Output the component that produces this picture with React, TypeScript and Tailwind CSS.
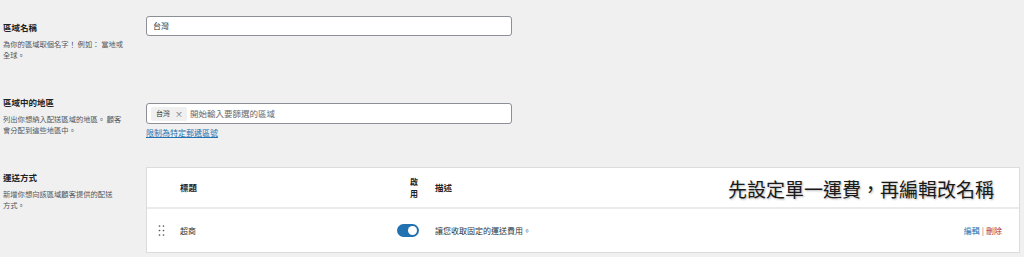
import React from "react";

const font = "font-['Noto_Sans_CJK_TC','Noto_Sans',sans-serif]";

function Label({ children }: { children: React.ReactNode }) {
  return <div className="text-[8.5px] leading-[12px] font-bold text-[#1d2327]">{children}</div>;
}

function Desc({ lines }: { lines: string[] }) {
  return (
    <div className="mt-[6px] text-[7.3px] leading-[10.5px] text-[#50575e]">
      {lines.map((l, i) => (
        <div key={i} className="whitespace-pre">{l}</div>
      ))}
    </div>
  );
}

function DragHandle() {
  return (
    <svg width="7" height="11" viewBox="0 0 7 11" className="block">
      {[1, 5.5, 10].map((y) =>
        [1.5, 5.5].map((x) => <circle key={`${x}-${y}`} cx={x} cy={y} r="0.85" fill="#50575e" />)
      )}
    </svg>
  );
}

export default function App() {
  return (
    <div lang="zh-TW" className={`${font} w-[1024px] h-[257px] bg-[#f0f0f0] text-[#1d2327] relative overflow-hidden`}>
      {/* Section 1 */}
      <div className="flex h-[90px]">
        <div className="w-[146px] pl-[3px] pt-[21px]">
          <Label>區域名稱</Label>
          <Desc lines={["為你的區域取個名字！ 例如： 當地或", "全球。"]} />
        </div>
        <div className="pt-[16px]">
          <div className="w-[366px] h-[20px] bg-white border border-[#8c8f94] rounded-[3px] flex items-center pl-[6px] text-[8px] text-[#2c3338]">
            台灣
          </div>
        </div>
      </div>

      {/* Section 2 */}
      <div className="flex h-[70px]">
        <div className="w-[146px] pl-[3px] pt-[6px]">
          <Label>區域中的地區</Label>
          <Desc lines={["列出你想納入配送區域的地區。 顧客", "會分配到這些地區中。"]} />
        </div>
        <div className="pt-[13px]">
          <div className="w-[366px] h-[21px] bg-white border border-[#8c8f94] rounded-[3px] flex items-center pl-[4px]">
            <div className="h-[14px] w-[36px] bg-[#f0f0f0] rounded-[2px] flex items-center pl-[5px] gap-[5px] text-[7px] text-[#2c3338]">
              <span>台灣</span>
              <span className="text-[#646970] text-[8px] leading-none">×</span>
            </div>
            <span className="ml-[3px] text-[8.5px] text-[#646970]">開始輸入要篩選的區域</span>
          </div>
          <div className="mt-[4px] text-[8px] leading-[10px] text-[#2271b1] underline">限制為特定郵遞區號</div>
        </div>
      </div>

      {/* Section 3 */}
      <div className="flex">
        <div className="w-[146px] pl-[3px] pt-[11px]">
          <Label>運送方式</Label>
          <Desc lines={["新增你想向該區域顧客提供的配送", "方式。"]} />
        </div>
        <div className="pt-[7px]">
          <div className="w-[874px] bg-white border border-[#dcdcde]">
            {/* header */}
            <div className="h-[41px] flex items-center border-b-2 border-[#ebebeb] text-[8.5px] font-bold text-[#1d2327]">
              <div className="w-[33px]" />
              <div className="w-[220px]">標題</div>
              <div className="w-[35px] text-[8px] leading-[12px] flex flex-col items-center pr-[7px]">
                <span>啟</span>
                <span>用</span>
              </div>
              <div>描述</div>
            </div>
            {/* row */}
            <div className="h-[43px] flex items-center text-[8px] text-[#2c3338]">
              <div className="w-[33px] pl-[11px]">
                <DragHandle />
              </div>
              <div className="w-[217px]">超商</div>
              <div className="w-[38px]">
                <div className="w-[22px] h-[13px] rounded-full bg-[#2271b1] flex items-center justify-end pr-[2px]">
                  <div className="w-[9px] h-[9px] rounded-full bg-white" />
                </div>
              </div>
              <div className="flex-1">讓您收取固定的運送費用。</div>
              <div className="pr-[17px] text-[8px]">
                <span className="text-[#2271b1]">編輯</span>
                <span className="text-[#787c82] mx-[2px]">|</span>
                <span className="text-[#b32d2e]">刪除</span>
              </div>
            </div>
          </div>
        </div>
      </div>

      {/* annotation overlay */}
      <div className="absolute left-[728px] top-[176px] text-[19px] leading-[26px] font-normal text-[#1a1a1a] [text-shadow:1px_1px_2px_rgba(0,0,0,0.3)] whitespace-nowrap">
        先設定單一運費，再編輯改名稱
      </div>
    </div>
  );
}
